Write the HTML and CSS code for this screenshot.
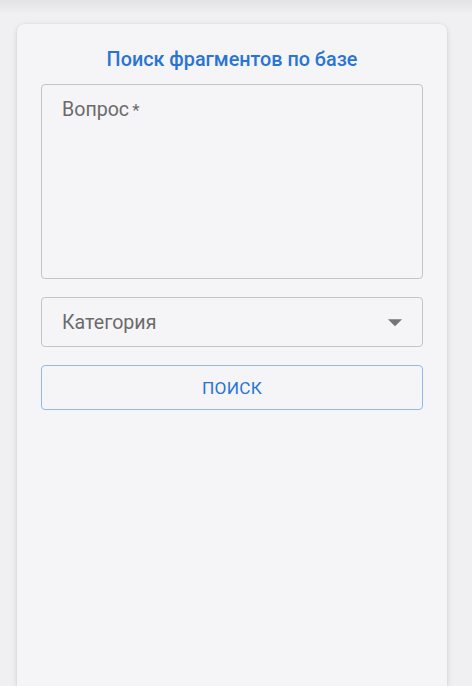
FILE: index.html
```html
<!DOCTYPE html>
<html lang="ru">
<head>
<meta charset="utf-8">
<link rel="stylesheet" href="styles.css">
</head>
<body>
<div class="topshadow"></div>
<main class="card">
  <h1 class="title">Поиск фрагментов по базе</h1>
  <div class="field textarea">
    <span class="label">Вопрос<span class="req">*</span></span>
  </div>
  <div class="field select">
    <span class="label">Категория</span>
    <svg class="arrow" width="34" height="34" viewBox="0 0 24 24"><path d="M7 10l5 5 5-5z" fill="#757575"/></svg>
  </div>
  <button class="btn">ПОИСК</button>
</main>
</body>
</html>
```
FILE: styles.css
```css
html, body { margin: 0; padding: 0; }
body {
  background: #f0f0f2;
  font-family: Roboto, "Noto Sans", sans-serif;
  height: 686px;
  overflow: hidden;
  position: relative;
}
.topshadow {
  position: absolute;
  left: 0; right: 0; top: 0;
  height: 14px;
  background: linear-gradient(#e3e3e5, rgba(240,240,242,0));
}
.card {
  position: relative;
  margin: 24px 0 0 17px;
  width: 430px;
  height: 662px;
  box-sizing: border-box;
  background: #f5f5f8;
  border-radius: 7px 7px 0 0;
  box-shadow: 0 2px 6px rgba(0,0,0,0.12), 0 0 2px rgba(0,0,0,0.08);
  padding: 24px 24px;
  display: flex;
  flex-direction: column;
}
.title {
  margin: 0 0 12px;
  text-align: center;
  font-size: 19.8px;
  font-weight: 500;
  color: #2a74d4;
  line-height: 24px;
}
.field {
  border: 1px solid #c4c4c6;
  border-radius: 4px;
  box-sizing: border-box;
  position: relative;
  color: #6b6b6b;
  font-size: 19.6px;
}
.textarea {
  height: 195px;
  padding: 13px 20px;
}
.req { margin-left: 3px; font-size: 17px; }
.select {
  margin-top: 18px;
  height: 50px;
  padding: 0 10px 0 20px;
  display: flex;
  align-items: center;
  justify-content: space-between;
}
.btn {
  margin-top: 18px;
  height: 45px;
  border: 1px solid #93b9ea;
  border-radius: 4px;
  background: transparent;
  color: #2a74d4;
  font-family: Roboto, "Noto Sans", sans-serif;
  font-size: 17.3px;
  font-weight: 400;
  letter-spacing: 0.2px;
}
```
